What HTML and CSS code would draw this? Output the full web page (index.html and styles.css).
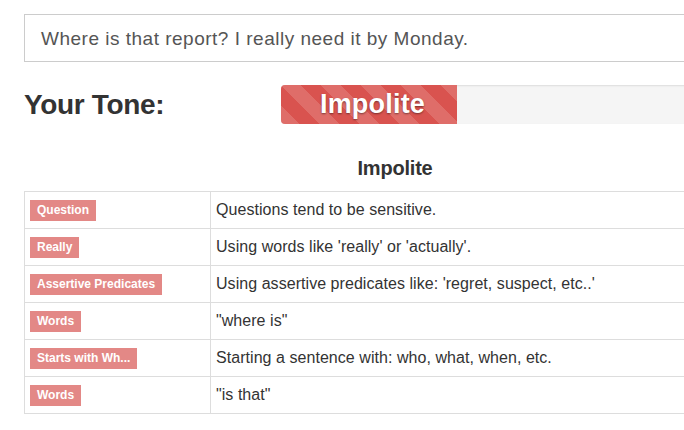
FILE: index.html
```html
<!DOCTYPE html>
<html>
<head>
<meta charset="utf-8">
<link rel="stylesheet" href="styles.css">
</head>
<body>
<div class="page">
  <div class="input">Where is that report? I really need it by Monday.</div>
  <div class="tone">
    <h2 class="tone-title">Your Tone:</h2>
    <div class="progress">
      <div class="bar" style="width: 176px">Impolite</div>
    </div>
  </div>
  <h3 class="table-title">Impolite</h3>
  <table class="rules">
    <tr><td class="c1"><span class="label">Question</span></td><td>Questions tend to be sensitive.</td></tr>
    <tr><td class="c1"><span class="label">Really</span></td><td>Using words like 'really' or 'actually'.</td></tr>
    <tr><td class="c1"><span class="label">Assertive Predicates</span></td><td>Using assertive predicates like: 'regret, suspect, etc..'</td></tr>
    <tr><td class="c1"><span class="label">Words</span></td><td>"where is"</td></tr>
    <tr><td class="c1"><span class="label">Starts with Wh...</span></td><td>Starting a sentence with: who, what, when, etc.</td></tr>
    <tr><td class="c1"><span class="label">Words</span></td><td>"is that"</td></tr>
  </table>
</div>
</body>
</html>
```
FILE: styles.css
```css
html, body {
  margin: 0;
  padding: 0;
  background: #fff;
  overflow: hidden;
}
body {
  font-family: "Liberation Sans", Arial, sans-serif;
  color: #333;
}
.page {
  width: 742px;
  padding: 14px 0 0 24px;
}
.input {
  box-sizing: border-box;
  height: 48px;
  border: 1px solid #ccc;
  padding: 0 16px;
  font-size: 19px;
  letter-spacing: 0.5px;
  line-height: 47px;
  color: #555;
}
.tone {
  display: flex;
  align-items: center;
  margin-top: 23px;
}
.tone-title {
  width: 257px;
  margin: 0;
  font-size: 28px;
  letter-spacing: -0.35px;
  font-weight: bold;
  color: #333;
}
.progress {
  flex: 1;
  height: 39px;
  background: #f5f5f5;
  border-radius: 4px;
  overflow: hidden;
  box-shadow: inset 0 1px 2px rgba(0,0,0,0.1);
  display: flex;
}
.bar {
  box-sizing: border-box;
  height: 100%;
  padding-left: 7px;
  background-color: #d9534f;
  background-image: linear-gradient(45deg, rgba(255,255,255,.15) 25%, transparent 25%, transparent 50%, rgba(255,255,255,.15) 50%, rgba(255,255,255,.15) 75%, transparent 75%, transparent);
  background-size: 40px 40px;
  color: #fff;
  font-size: 27px;
  font-weight: bold;
  letter-spacing: 0.2px;
  line-height: 39px;
  text-align: center;
  text-shadow: 0 1px 2px rgba(0,0,0,0.45);
}
.table-title {
  margin: 33px 0 0;
  height: 34px;
  text-align: center;
  font-size: 20px;
  font-weight: bold;
  letter-spacing: -0.2px;
  color: #333;
}
.rules {
  width: 100%;
  border-collapse: collapse;
  font-size: 16px;
  letter-spacing: 0.05px;
}
.rules td {
  border: 1px solid #ddd;
  height: 37px;
  padding: 0 5px;
  vertical-align: middle;
  box-sizing: border-box;
}
.rules td.c1 {
  width: 186px;
}
.label {
  display: inline-block;
  background: #e38886;
  color: #fff;
  font-size: 12px;
  font-weight: bold;
  letter-spacing: 0;
  height: 21px;
  line-height: 21px;
  padding: 0 7px;
  vertical-align: middle;
}
```
